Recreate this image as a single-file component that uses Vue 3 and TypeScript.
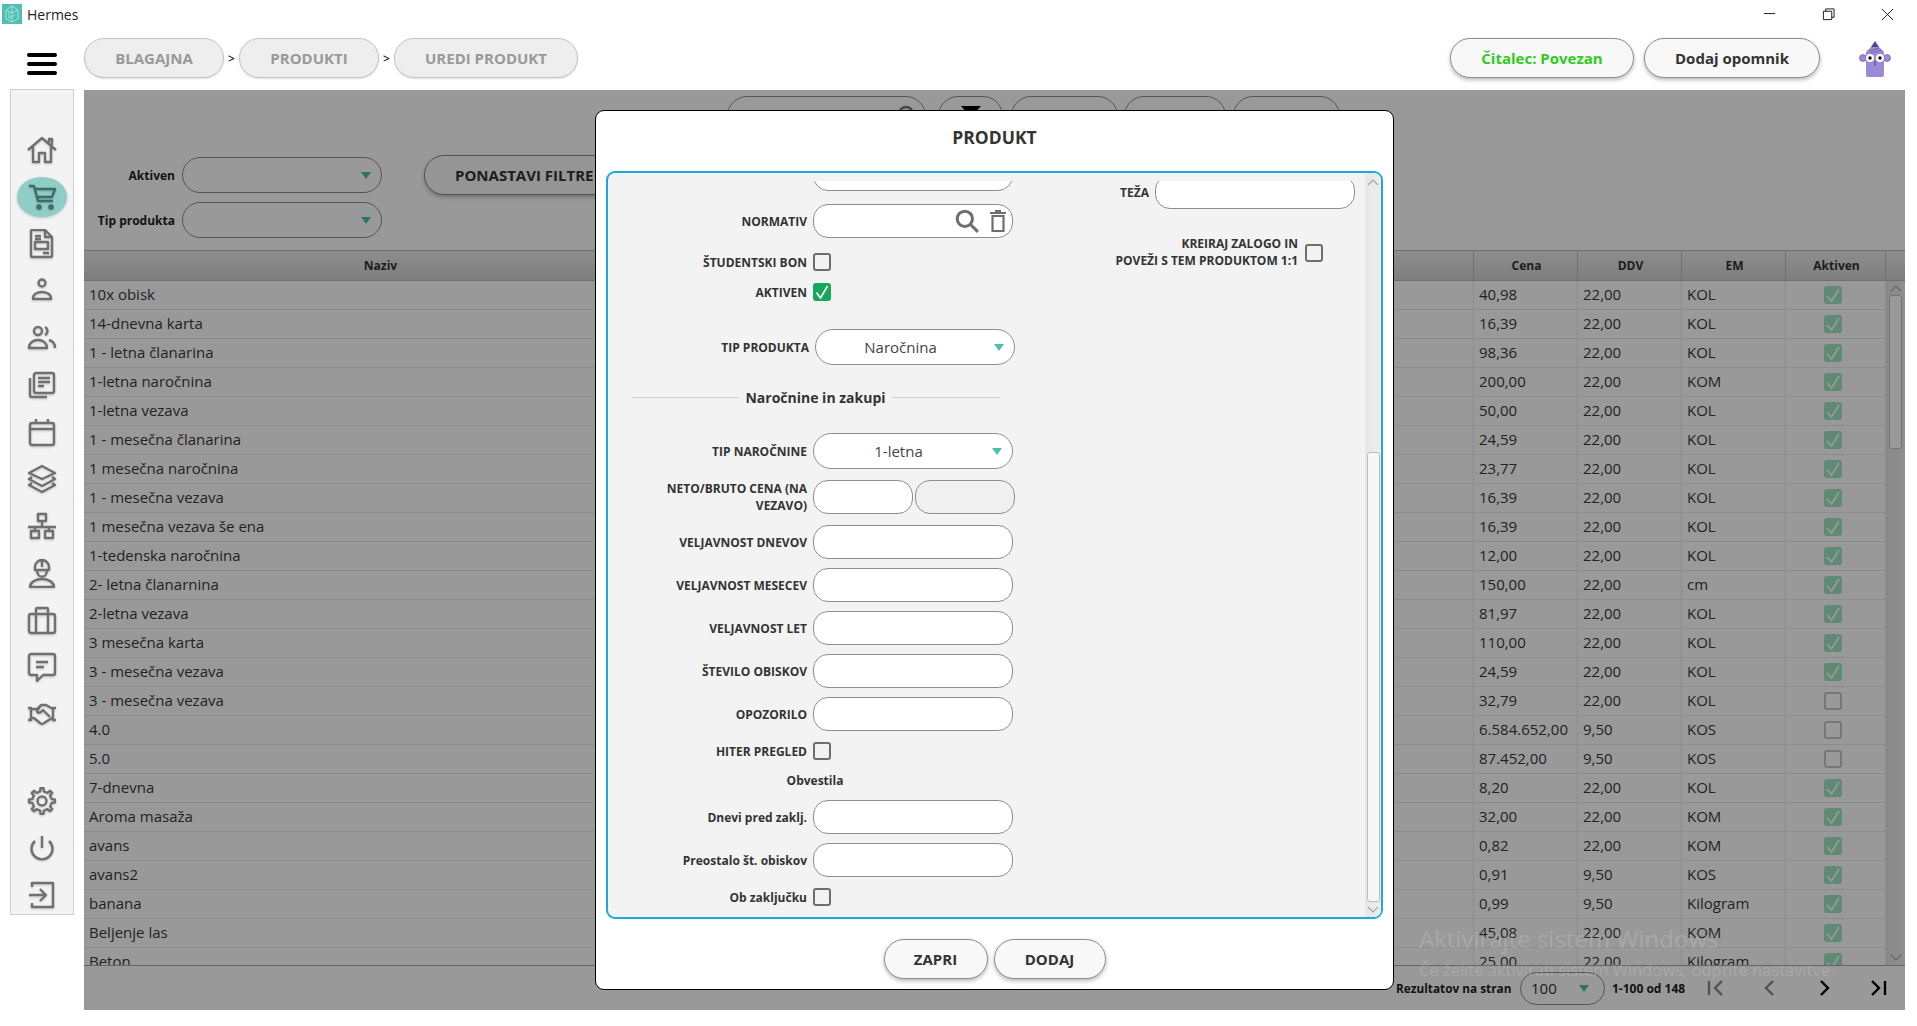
<script setup lang="ts">
interface Row { name: string; price: string; ddv: string; em: string; on: boolean }

const raw: [string, string, string, string, boolean][] = [
  ['10x obisk', '40,98', '22,00', 'KOL', true],
  ['14-dnevna karta', '16,39', '22,00', 'KOL', true],
  ['1 - letna članarina', '98,36', '22,00', 'KOL', true],
  ['1-letna naročnina', '200,00', '22,00', 'KOM', true],
  ['1-letna vezava', '50,00', '22,00', 'KOL', true],
  ['1 - mesečna članarina', '24,59', '22,00', 'KOL', true],
  ['1 mesečna naročnina', '23,77', '22,00', 'KOL', true],
  ['1 - mesečna vezava', '16,39', '22,00', 'KOL', true],
  ['1 mesečna vezava še ena', '16,39', '22,00', 'KOL', true],
  ['1-tedenska naročnina', '12,00', '22,00', 'KOL', true],
  ['2- letna članarnina', '150,00', '22,00', 'cm', true],
  ['2-letna vezava', '81,97', '22,00', 'KOL', true],
  ['3 mesečna karta', '110,00', '22,00', 'KOL', true],
  ['3 - mesečna vezava', '24,59', '22,00', 'KOL', true],
  ['3 - mesečna vezava', '32,79', '22,00', 'KOL', false],
  ['4.0', '6.584.652,00', '9,50', 'KOS', false],
  ['5.0', '87.452,00', '9,50', 'KOS', false],
  ['7-dnevna', '8,20', '22,00', 'KOL', true],
  ['Aroma masaža', '32,00', '22,00', 'KOM', true],
  ['avans', '0,82', '22,00', 'KOM', true],
  ['avans2', '0,91', '9,50', 'KOS', true],
  ['banana', '0,99', '9,50', 'Kilogram', true],
  ['Beljenje las', '45,08', '22,00', 'KOM', true],
  ['Beton', '25,00', '22,00', 'Kilogram', true],
]
const rows: Row[] = raw.map(([name, price, ddv, em, on]) => ({ name, price, ddv, em, on }))

const circle = (x: number, y: number, r: number) =>
  `M${x - r} ${y}a${r} ${r} 0 1 0 ${2 * r} 0a${r} ${r} 0 1 0 ${-2 * r} 0`

function gear(): string {
  const pts: string[] = []
  const teeth = 8
  for (let i = 0; i < teeth; i++) {
    const a = (i / teeth) * Math.PI * 2
    const step = (Math.PI * 2) / teeth
    const list: [number, number][] = [
      [9.6, a - step * 0.5],
      [9.8, a - step * 0.24],
      [13, a - step * 0.15],
      [13, a + step * 0.15],
      [9.8, a + step * 0.24],
    ]
    for (const [r, t] of list) {
      pts.push(`${(15 + r * Math.cos(t)).toFixed(2)} ${(15 + r * Math.sin(t)).toFixed(2)}`)
    }
  }
  return 'M' + pts.join('L') + 'Z' + circle(15, 15, 4.5)
}

const topIcons: string[] = [
  'M1 15L15 3L29 15M6 11V27H12V18H18V27H24V11M22 8V4H25V10',
  'M2 4H7L11 19H26M8 7H28L25 15H10' + circle(12, 25, 1.6) + circle(24, 25, 1.6),
  'M5 1H18L25 8V27a1 1 0 0 1-1 1H5a1 1 0 0 1-1-1V2a1 1 0 0 1 1-1ZM18 1V8H25M8 7H14M8 10H14M8 13H21V20H8ZM16 24H22',
  circle(15, 7, 3.5) + 'M6 23V22c0-4 5-6 9-6s9 2 9 6v1Z',
  circle(11, 8, 4) + 'M2 25c0-5 4-8 9-8s9 3 9 8ZM18 4a4.5 4.5 0 0 1 0 8M22 17c4 1 6 4 6 8',
  'M3 8V25a2 2 0 0 0 2 2H20M9 3H25a2 2 0 0 1 2 2V21a2 2 0 0 1-2 2H9a2 2 0 0 1-2-2V5a2 2 0 0 1 2-2ZM11 8H23M11 12H23M11 16H17',
  'M5 6H25a2 2 0 0 1 2 2V26a2 2 0 0 1-2 2H5a2 2 0 0 1-2-2V8a2 2 0 0 1 2-2ZM3 12H27M9 2V7M21 2V7',
  'M15 2L28 9L15 15L2 9ZM5 13L2 15L15 22L28 15L25 13M5 19L2 21L15 28L28 21L25 19',
  'M11 3H19V10H11ZM15 10V16M1 16H29M8 16V20M22 16V20M4 20H12V27H4ZM18 20H26V27H18Z',
  'M8 9a7 7 0 0 1 14 0v3H8ZM15 2V9M10 12c0 9 10 9 10 0M3 29c0-5 6-8 12-8s12 3 12 8Z',
  'M4 9H26a2 2 0 0 1 2 2V26a2 2 0 0 1-2 2H4a2 2 0 0 1-2-2V11a2 2 0 0 1 2-2ZM9 9V4a1 1 0 0 1 1-1H20a1 1 0 0 1 1 1V9M9 9V28M21 9V28',
  'M4 2H26a2 2 0 0 1 2 2V21a2 2 0 0 1-2 2H16L10 29V23H4a2 2 0 0 1-2-2V4a2 2 0 0 1 2-2ZM9 10H21M9 15H17',
  'M1 9H4V21H1M29 9H26V21H29M4 10H10L14 6H19L26 10M4 19H7L13 24Q15 26 17 24L25 19M14 6L10 12Q11 15 14 13L16 11L23 18',
]
const bottomIcons: string[] = [
  gear(),
  'M15 3V15M8 8a10.5 10.5 0 1 0 14 0',
  'M5 7V3H26V27H5V23M2 15H19M13 9L19 15L13 21',
]
</script>

<template>
  <div class="app">
    <div class="titlebar">
      <svg class="logo" viewBox="0 0 20 20">
        <rect width="20" height="20" fill="#4ec0b4" />
        <path d="M10 2L4 6V15L10 18L16 15V6ZM10 2V18M4 6L10 9L16 6M7 8V14L13 11" fill="none" stroke="#c9ece8" stroke-width="0.7" />
      </svg>
      <span class="title">Hermes</span>
      <div class="winctl">
        <svg viewBox="0 0 14 14"><path d="M1 6H13" /></svg>
        <svg viewBox="0 0 14 14"><path d="M1.5 3.5H10.5V12.5H1.5ZM4 3.5V1H13V10H10.5" /></svg>
        <svg viewBox="0 0 14 14"><path d="M1 1L13 13M13 1L1 13" /></svg>
      </div>
    </div>

    <header class="header">
      <div class="burger"><i></i><i></i><i></i></div>
      <nav class="crumbs">
        <span class="crumb w1">BLAGAJNA</span>
        <span class="sep">&gt;</span>
        <span class="crumb w1">PRODUKTI</span>
        <span class="sep">&gt;</span>
        <span class="crumb w2">UREDI PRODUKT</span>
      </nav>
      <div class="right">
        <button class="pill reader">Čitalec: Povezan</button>
        <button class="pill remind">Dodaj opomnik</button>
        <svg class="avatar" viewBox="0 0 32 38">
          <circle cx="4" cy="18" r="3.5" fill="#9b8bd6" stroke="#5d4fa0" stroke-width="0.6" />
          <circle cx="28" cy="18" r="3.5" fill="#9b8bd6" stroke="#5d4fa0" stroke-width="0.6" />
          <path d="M7 12L16 3L25 12V35a2 2 0 0 1-2 2H9a2 2 0 0 1-2-2Z" fill="#9b8bd6" />
          <path d="M12 7L16 1L20 7Z" fill="#544696" />
          <path d="M10 11L20 8M11 13L23 10" stroke="#6d5db0" stroke-width="0.8" fill="none" />
          <circle cx="11" cy="18" r="4" fill="#fff" /><circle cx="21" cy="18" r="4" fill="#fff" />
          <circle cx="11" cy="18" r="1.7" fill="#111" /><circle cx="21" cy="18" r="1.7" fill="#111" />
          <path d="M16 21V26" stroke="#333" stroke-width="0.8" />
        </svg>
      </div>
    </header>

    <div class="body">
      <aside class="sidebar">
        <div v-for="(d, i) in topIcons" :key="i" class="nav-item">
          <span class="nav-icon" :class="{ active: i === 1 }">
            <svg viewBox="0 0 30 30"><path :d="d" /></svg>
          </span>
        </div>
        <div class="spacer"></div>
        <div v-for="(d, i) in bottomIcons" :key="'b' + i" class="nav-item">
          <span class="nav-icon">
            <svg viewBox="0 0 30 30"><path :d="d" /></svg>
          </span>
        </div>
      </aside>

      <main class="main">
        <section class="filters">
          <div class="toolbar">
            <span class="tool t-search">
              <svg viewBox="0 0 22 22"><path d="M9 2a7 7 0 1 0 0 14a7 7 0 1 0 0-14ZM14 14L21 21" /></svg>
            </span>
            <span class="tool t-filter">
              <svg viewBox="0 0 20 20"><path d="M0 0H20L12 9V20L8 17V9Z" /></svg>
            </span>
            <span class="tool t-a"></span>
            <span class="tool t-b"></span>
            <span class="tool t-c"></span>
          </div>
          <div class="filter-row">
            <div class="filter-form">
              <label class="flabel">Aktiven</label>
              <div class="select"><span class="sel-text"></span><i class="arrow"></i></div>
              <label class="flabel">Tip produkta</label>
              <div class="select"><span class="sel-text"></span><i class="arrow"></i></div>
            </div>
            <button class="pill reset">PONASTAVI FILTRE</button>
          </div>
        </section>

        <section class="table">
          <div class="thead">
            <div class="th c-name">Naziv</div>
            <div class="th c-rest"></div>
            <div class="th c-num">Cena</div>
            <div class="th c-num">DDV</div>
            <div class="th c-em">EM</div>
            <div class="th c-act">Aktiven</div>
            <div class="th c-sb"></div>
          </div>
          <div class="tbody">
            <div class="rows">
              <div v-for="(r, i) in rows" :key="i" class="tr">
                <div class="td c-name">{{ r.name }}</div>
                <div class="td c-rest"></div>
                <div class="td c-num">{{ r.price }}</div>
                <div class="td c-num">{{ r.ddv }}</div>
                <div class="td c-em">{{ r.em }}</div>
                <div class="td c-act">
                  <span class="tcheck" :class="{ on: r.on }">
                    <svg v-if="r.on" viewBox="0 0 18 18"><path d="M3 10L7.5 15L15 3" /></svg>
                  </span>
                </div>
              </div>
            </div>
            <div class="tscroll">
              <svg class="chev" viewBox="0 0 12 8"><path d="M1 7L6 2L11 7" /></svg>
              <div class="tthumb"></div>
              <svg class="chev end" viewBox="0 0 12 8"><path d="M1 1L6 6L11 1" /></svg>
            </div>
          </div>
        </section>

        <footer class="pager">
          <span class="plabel">Rezultatov na stran</span>
          <div class="select psel"><span class="ptext">100</span><i class="arrow"></i></div>
          <span class="prange">1-100 od 148</span>
          <div class="pnav">
            <svg viewBox="0 0 20 20" class="dim"><path d="M3 3V17M16 3L9 10L16 17" /></svg>
            <svg viewBox="0 0 20 20" class="dim"><path d="M13 3L6 10L13 17" /></svg>
            <svg viewBox="0 0 20 20"><path d="M7 3L14 10L7 17" /></svg>
            <svg viewBox="0 0 20 20"><path d="M4 3L11 10L4 17M17 3V17" /></svg>
          </div>
        </footer>

        <div class="overlay">
          <div class="modal">
            <h2 class="modal-title">PRODUKT</h2>
            <div class="panel">
              <div class="scroller">
                <div class="form">
                  <div class="col-left">
                    <div class="row"><span class="lab"></span><div class="input"></div></div>
                    <div class="row mt13">
                      <span class="lab">NORMATIV</span>
                      <div class="input normativ">
                        <svg viewBox="0 0 22 22" class="ic-search"><path d="M9 2a7 7 0 1 0 0 14a7 7 0 1 0 0-14ZM14 14L21 21" /></svg>
                        <svg viewBox="0 0 18 22" class="ic-trash"><path d="M1 3H17M6 1H12M3.5 6H14.5V21H3.5Z" /></svg>
                      </div>
                    </div>
                    <div class="row mt15"><span class="lab">ŠTUDENTSKI BON</span><span class="check"></span></div>
                    <div class="row mt12">
                      <span class="lab">AKTIVEN</span>
                      <span class="check on"><svg viewBox="0 0 18 18"><path d="M3.5 9.5L7.5 15L14.5 3" /></svg></span>
                    </div>
                    <div class="row mt28 shifted">
                      <span class="lab">TIP PRODUKTA</span>
                      <div class="select"><span class="sel-text">Naročnina</span><i class="arrow"></i></div>
                    </div>
                    <div class="divider"><i></i><span>Naročnine in zakupi</span><i></i></div>
                    <div class="row mt27">
                      <span class="lab">TIP NAROČNINE</span>
                      <div class="select"><span class="sel-text">1-letna</span><i class="arrow"></i></div>
                    </div>
                    <div class="row mt11">
                      <span class="lab two">NETO/BRUTO CENA (NA <br />VEZAVO)</span>
                      <div class="pair"><div class="input half"></div><div class="input half off"></div></div>
                    </div>
                    <div class="row mt11"><span class="lab">VELJAVNOST DNEVOV</span><div class="input"></div></div>
                    <div class="row mt9"><span class="lab">VELJAVNOST MESECEV</span><div class="input"></div></div>
                    <div class="row mt9"><span class="lab">VELJAVNOST LET</span><div class="input"></div></div>
                    <div class="row mt9"><span class="lab">ŠTEVILO OBISKOV</span><div class="input"></div></div>
                    <div class="row mt9"><span class="lab">OPOZORILO</span><div class="input"></div></div>
                    <div class="row mt11"><span class="lab">HITER PREGLED</span><span class="check"></span></div>
                    <div class="subhead">Obvestila</div>
                    <div class="row mt11"><span class="lab">Dnevi pred zaklj.</span><div class="input"></div></div>
                    <div class="row mt9"><span class="lab">Preostalo št. obiskov</span><div class="input"></div></div>
                    <div class="row mt11"><span class="lab">Ob zaključku</span><span class="check"></span></div>
                  </div>
                  <div class="col-right">
                    <div class="row"><span class="lab r1">TEŽA</span><div class="input"></div></div>
                    <div class="row deposit">
                      <span class="lab r2">KREIRAJ ZALOGO IN<br />POVEŽI S TEM PRODUKTOM 1:1</span>
                      <span class="check dep-check"></span>
                    </div>
                  </div>
                </div>
              </div>
              <div class="mscroll">
                <svg class="chev" viewBox="0 0 12 8"><path d="M1 7L6 2L11 7" /></svg>
                <div class="mthumb"></div>
                <svg class="chev end" viewBox="0 0 12 8"><path d="M1 1L6 6L11 1" /></svg>
              </div>
            </div>
            <div class="actions">
              <button class="pill close">ZAPRI</button>
              <button class="pill add">DODAJ</button>
            </div>
          </div>
        </div>
      </main>
    </div>

    <div class="watermark">
      <div class="wm1">Aktivirajte sistem Windows</div>
      <div class="wm2">Če želite aktivirati sistem Windows, odprite nastavitve.</div>
    </div>
  </div>
</template>

<style>
html, body { margin: 0; padding: 0; background: #fff; }
</style>

<style scoped>
* { box-sizing: border-box; }
.app {
  position: relative; width: 1917px; height: 1026px; overflow: hidden; background: #fff;
  font-family: "Open Sans", "Liberation Sans", sans-serif; color: #333;
}
.titlebar { height: 30px; display: flex; align-items: center; padding-left: 2px; }
.logo { width: 20px; height: 20px; margin-top: -2px; }
.title { font-size: 14px; margin-left: 5px; margin-top: -2px; color: #222; }
.winctl { margin-left: auto; display: flex; gap: 46px; padding-right: 23px; }
.winctl svg { width: 13px; height: 13px; margin-top: -2px; }
.winctl path { fill: none; stroke: #111; stroke-width: 1; }

.header { height: 60px; display: flex; align-items: flex-start; padding: 8px 0 0 27px; }
.burger { width: 30px; margin-top: 15px; margin-right: 27px; display: flex; flex-direction: column; gap: 5px; }
.burger i { display: block; height: 4px; background: #000; border-radius: 2px; }
.crumbs { display: flex; align-items: center; }
.crumb {
  height: 40px; display: flex; align-items: center; justify-content: center; border-radius: 20px;
  background: #eee; border: 1.5px solid #c4c4c4; color: #999; font-size: 15px; font-weight: 700;
  box-shadow: 0 1px 2px rgba(0, 0, 0, .12);
}
.w1 { width: 140px; }
.w2 { width: 184px; }
.sep { width: 15px; text-align: center; font-size: 12px; font-weight: 600; color: #222; }
.right { margin-left: auto; display: flex; align-items: flex-start; padding-right: 26px; }
.pill {
  height: 40px; border-radius: 20px; border: 1.5px solid #8e8e8e; background: #f8f8f8;
  font: 700 15px "Open Sans", "Liberation Sans", sans-serif; color: #333; padding: 0;
  box-shadow: 0 2px 4px rgba(0, 0, 0, .28);
}
.reader { width: 184px; color: #30cb22; }
.remind { width: 176px; margin-left: 10px; }
.avatar { width: 32px; height: 38px; margin-left: 39px; margin-top: 2px; }

.body { display: flex; align-items: flex-start; gap: 10px; padding-left: 10px; }
.sidebar {
  width: 64px; height: 826px; margin-top: -1px; padding-top: 36px; flex: none; display: flex; flex-direction: column;
  align-items: center; background: #f3f3f3; border: 1px solid #cfcfcf;
}
.nav-item { height: 47px; flex: none; display: flex; align-items: center; justify-content: center; width: 100%; }
.nav-icon { width: 50px; height: 40px; display: flex; align-items: center; justify-content: center; border-radius: 50%; }
.nav-icon.active { background: #8fcdc6; box-shadow: 0 1px 3px rgba(0, 0, 0, .2); }
.nav-icon svg { width: 30px; height: 30px; filter: drop-shadow(0 1px 1px rgba(0, 0, 0, .18)); }
.nav-icon path { fill: none; stroke: #707070; stroke-width: 2.4; stroke-linejoin: round; }
.nav-icon.active path { stroke: #3f6a68; stroke-width: 2.4; }
.spacer { height: 40px; flex: none; }

.main { position: relative; width: 1821px; height: 920px; flex: none; display: flex; flex-direction: column; background: #fff; }
.filters { height: 160px; flex: none; padding-top: 6px; }
.toolbar { display: flex; height: 40px; margin-left: 643px; }
.tool { height: 40px; border: 1.5px solid #8e8e8e; border-radius: 20px; flex: none; display: flex; align-items: center; }
.t-search { width: 199px; justify-content: flex-end; padding-right: 6px; }
.t-search svg { width: 22px; height: 22px; }
.t-search path { fill: none; stroke: #757575; stroke-width: 2.6; }
.t-filter { width: 65px; margin-left: 12px; justify-content: center; }
.t-filter svg { width: 20px; height: 20px; }
.t-filter path { fill: #000; }
.t-a { width: 107px; margin-left: 8px; }
.t-b { width: 102px; margin-left: 6px; }
.t-c { width: 107px; margin-left: 7px; }
.filter-row { display: flex; align-items: flex-start; margin-top: 19px; }
.filter-form { display: grid; grid-template-columns: 91px 200px; column-gap: 7px; row-gap: 9px; margin-top: 2px; align-items: center; }
.flabel { text-align: right; font-size: 12px; font-weight: 700; color: #222; }
.reset { width: 215px; margin-left: 42px; text-align: left; padding-left: 30px; }

.select {
  width: 200px; height: 36px; flex: none; display: flex; align-items: center; background: #fff;
  border: 1.5px solid #8e8e8e; border-radius: 18px; padding-right: 10px;
}
.sel-text { flex: 1; text-align: center; margin-right: 9px; font-size: 15px; color: #444; padding-bottom: 1px; }
.arrow { width: 0; height: 0; border-left: 5px solid transparent; border-right: 5px solid transparent; border-top: 7px solid #49c0b0; flex: none; }

.table { flex: 1; min-height: 0; display: flex; flex-direction: column; }
.thead {
  height: 31px; flex: none; display: flex; border-top: 1px solid #b9b9b9; border-bottom: 1px solid #b9b9b9;
  background: linear-gradient(#ececec, #d2d2d2);
}
.th { display: flex; align-items: center; justify-content: center; font-size: 12px; font-weight: 700; color: #333; border-right: 1px solid #bcbcbc; padding-left: 2px; }
.c-name { width: 594px; flex: none; }
.c-rest { width: 796px; flex: none; }
.c-num { width: 104px; flex: none; }
.c-em { width: 104px; flex: none; }
.c-act { width: 100px; flex: none; }
.c-sb { flex: 1; border-right: none; }
.th.c-name { padding-left: 0; }
.tbody { flex: 1; min-height: 0; display: flex; overflow: hidden; }
.rows { width: 1802px; flex: none; }
.tr { height: 29px; display: flex; border-bottom: 1px solid #eaeaea; }
.td { display: flex; align-items: center; padding: 0 0 2px 5px; font-size: 15px; color: #3a3a3a; border-right: 1px solid #eaeaea; }
.td.c-name { border-right: none; }
.td.c-rest { border-right: 1px solid #eaeaea; }
.td.c-act { justify-content: center; padding: 0 5px 0 0; }
.tcheck { width: 18px; height: 18px; border-radius: 3px; border: 2px solid #c6c6c6; display: block; }
.tcheck.on { background: #9fe6c3; border-color: #9fe6c3; }
.tcheck svg { display: block; width: 18px; height: 18px; margin: -2px; }
.tcheck path { fill: none; stroke: #fff; stroke-width: 1.8; }
.tscroll { flex: 1; position: relative; display: flex; flex-direction: column; align-items: center; background: linear-gradient(90deg, #e4e4e4, #eeeeee); }
.chev { width: 12px; height: 8px; flex: none; margin-top: 3px; }
.chev.end { margin-top: auto; margin-bottom: 3px; }
.chev path { fill: none; stroke: #a8a8a8; stroke-width: 1.2; }
.tthumb { width: 13px; height: 154px; margin-top: 3px; background: #fff; border: 1px solid #c2c2c2; border-radius: 3px; }

.pager { height: 45px; flex: none; display: flex; align-items: center; padding-left: 1312px; border-top: 1px solid #aaa; }
.plabel { width: 117px; flex: none; font-size: 11.8px; font-weight: 700; color: #222; white-space: nowrap; }
.psel { width: 85px; height: 33px; margin-left: 7px; border-radius: 17px; padding-right: 10px; }
.ptext { flex: 1; padding-left: 10px; font-size: 15px; color: #333; }
.psel .arrow { margin-right: 5px; }
.prange { width: 77px; margin-left: 7px; font-size: 12px; font-weight: 700; color: #222; flex: none; }
.pnav { display: flex; flex: none; }
.pnav svg { width: 54px; height: 20px; flex: none; }
.pnav path { fill: none; stroke: #000; stroke-width: 2.4; }
.pnav .dim path { stroke: #8a8a8a; }

.overlay { position: absolute; inset: 0; background: rgba(0, 0, 0, .4); display: flex; align-items: flex-start; justify-content: center; padding-top: 20px; }
.modal {
  width: 799px; height: 880px; background: #fff; border: 1px solid #000; border-radius: 9px;
  display: flex; flex-direction: column; padding: 0 10px;
}
.modal-title { height: 60px; margin: 0; padding-bottom: 8px; flex: none; display: flex; align-items: center; justify-content: center; font-size: 17.5px; font-weight: 700; color: #333; }
.panel {
  height: 748px; flex: none; display: flex; background: #f3f3f3; border: 2px solid #1ca9dc; border-radius: 9px; overflow: hidden;
}
.scroller { flex: 1; min-width: 0; margin-top: 8px; overflow: hidden; }
.form { display: flex; margin-top: -24px; }
.col-left { width: 412px; flex: none; }
.col-right { flex: 1; padding-top: 18px; }
.row { display: flex; align-items: center; }
.lab { width: 199px; flex: none; margin-right: 6px; text-align: right; font-size: 12px; font-weight: 700; line-height: 17px; color: #333; }
.input { width: 200px; height: 34px; flex: none; background: #fff; border: 1.5px solid #8e8e8e; border-radius: 15px; }
.normativ { display: flex; align-items: center; justify-content: flex-end; padding-right: 5px; }
.ic-search { width: 24px; height: 24px; }
.ic-search path { fill: none; stroke: #6e6e6e; stroke-width: 2.8; }
.ic-trash { width: 18px; height: 22px; margin-left: 10px; }
.ic-trash path { fill: none; stroke: #6e6e6e; stroke-width: 2.2; }
.check { width: 18px; height: 18px; flex: none; border: 2px solid #6e6e6e; border-radius: 3px; background: transparent; display: block; }
.check.on { background: #17a65b; border-color: #17a65b; }
.check svg { display: block; width: 18px; height: 18px; margin: -2px; }
.check path { fill: none; stroke: #fff; stroke-width: 1.6; }
.mt9 { margin-top: 9px; }
.mt11 { margin-top: 11px; }
.mt12 { margin-top: 12px; }
.mt13 { margin-top: 13px; }
.mt15 { margin-top: 15px; }
.mt27 { margin-top: 27px; }
.mt28 { margin-top: 28px; }
.shifted { padding-left: 2px; }
.pair { display: flex; gap: 2px; width: 202px; flex: none; }
.half { width: 100px; }
.off { background: #f0f0f0; }
.divider { margin: 23px 0 0 23px; width: 369px; height: 18px; display: flex; align-items: center; gap: 6px; font-size: 14px; font-weight: 700; color: #333; }
.divider i { flex: 1; height: 1px; background: #cfcfcf; }
.subhead { margin-top: 13px; height: 16px; padding-left: 0; width: 414px; text-align: center; font-size: 12px; font-weight: 700; line-height: 16px; color: #333; }
.r1 { width: 129px; }
.deposit { margin-top: 26px; }
.dep-check { margin-top: 2px; }
.r2 { width: 278px; margin-right: 7px; }
.mscroll { width: 16px; flex: none; display: flex; flex-direction: column; align-items: center; background: linear-gradient(90deg, #e6e6e6, #eeeeee); }
.mscroll .chev { margin-top: 5px; }
.mscroll .chev.end { margin-top: auto; margin-bottom: 3px; }
.mthumb { width: 13px; height: 450px; margin-top: 266px; background: #f7f7f7; border: 1px solid #bdbdbd; border-radius: 3px; }
.actions { flex: 1; display: flex; align-items: flex-start; justify-content: center; gap: 6px; padding-top: 20px; }
.close { width: 104px; }
.add { width: 112px; }

.watermark { position: absolute; left: 1419px; top: 922px; color: rgba(255, 255, 255, .17); pointer-events: none; white-space: nowrap; }
.wm1 { font-size: 24px; line-height: 34px; }
.wm2 { font-size: 16.5px; line-height: 24px; margin-top: 2px; }
</style>
